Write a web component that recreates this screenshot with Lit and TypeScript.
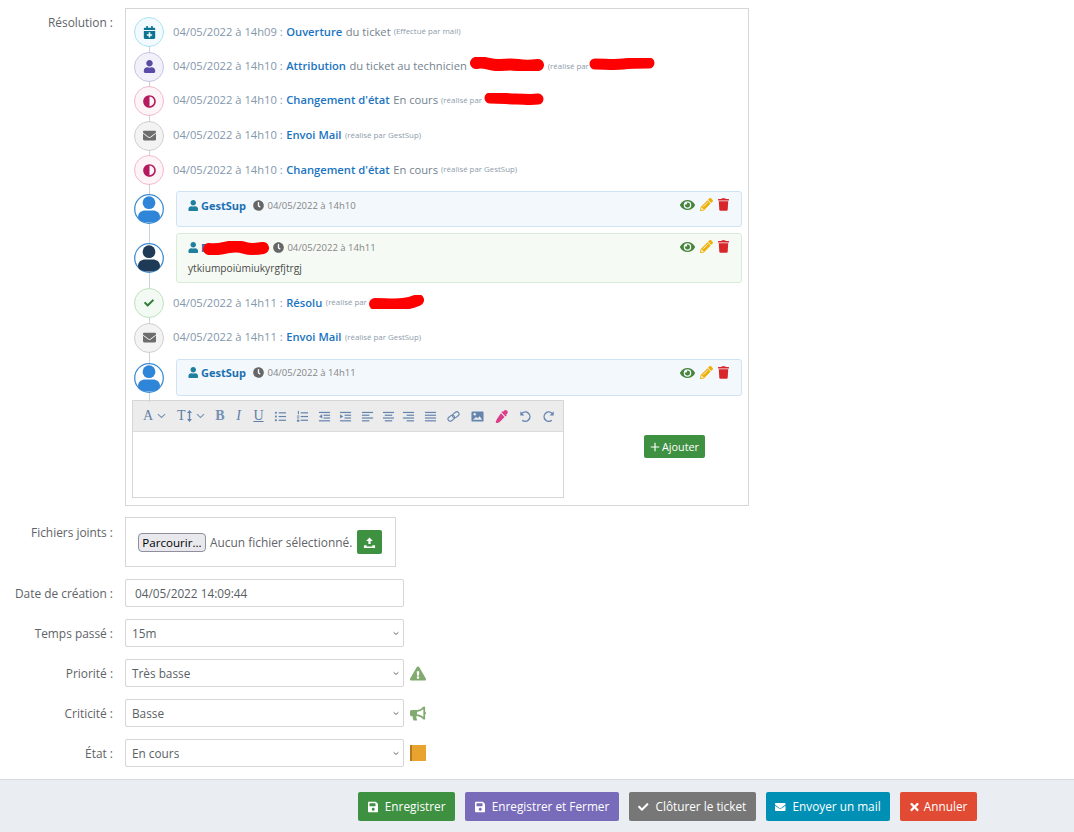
import { LitElement, html, css, svg } from "lit";
import { customElement } from "lit/decorators.js";

const P = {
  user: ["0 0 448 512", "M224 256c70.7 0 128-57.3 128-128S294.7 0 224 0 96 57.3 96 128s57.3 128 128 128zm89.6 32h-16.7c-22.2 10.2-46.9 16-72.9 16s-50.6-5.8-72.9-16h-16.7C60.2 288 0 348.2 0 422.4V464c0 26.5 21.5 48 48 48h352c26.5 0 48-21.5 48-48v-41.6c0-74.2-60.2-134.4-134.4-134.4z"],
  envelope: ["0 0 512 512", "M502.3 190.8c3.9-3.1 9.7-.2 9.7 4.7V400c0 26.5-21.5 48-48 48H48c-26.5 0-48-21.5-48-48V195.6c0-5 5.7-7.8 9.7-4.7 22.4 17.4 52.1 39.5 154.1 113.6 21.1 15.4 56.7 47.8 92.2 47.6 35.7.3 72-32.8 92.3-47.6 102-74.1 131.6-96.3 154-113.7zM256 320c23.2.4 56.6-29.2 73.4-41.4 132.7-96.3 142.8-104.7 173.4-128.7 5.8-4.5 9.2-11.5 9.2-18.9v-19c0-26.5-21.5-48-48-48H48C21.5 64 0 85.5 0 112v19c0 7.4 3.4 14.3 9.2 18.9 30.6 23.9 40.7 32.4 173.4 128.7 16.8 12.2 50.2 41.8 73.4 41.4z"],
  adjust: ["0 0 512 512", "M8 256c0 136.966 111.033 248 248 248s248-111.034 248-248S392.966 8 256 8 8 119.033 8 256zm248 184V72c101.705 0 184 82.311 184 184 0 101.705-82.311 184-184 184z"],
  check: ["0 0 512 512", "M173.898 439.404l-166.4-166.4c-9.997-9.997-9.997-26.206 0-36.204l36.203-36.204c9.997-9.998 26.207-9.998 36.204 0L192 312.69 432.095 72.596c9.997-9.997 26.207-9.997 36.204 0l36.203 36.204c9.997 9.997 9.997 26.206 0 36.204l-294.4 294.401c-9.998 9.997-26.207 9.997-36.204-.001z"],
  calendar: ["0 0 448 512", "M436 160H12c-6.6 0-12-5.4-12-12v-36c0-26.5 21.5-48 48-48h48V12c0-6.6 5.4-12 12-12h40c6.6 0 12 5.4 12 12v52h128V12c0-6.6 5.4-12 12-12h40c6.6 0 12 5.4 12 12v52h48c26.5 0 48 21.5 48 48v36c0 6.6-5.4 12-12 12zM12 192h424c6.6 0 12 5.4 12 12v260c0 26.5-21.5 48-48 48H48c-26.5 0-48-21.5-48-48V204c0-6.6 5.4-12 12-12zm316 140c0-6.6-5.4-12-12-12h-60v-60c0-6.6-5.4-12-12-12h-40c-6.6 0-12 5.4-12 12v60h-60c-6.6 0-12 5.4-12 12v40c0 6.6 5.4 12 12 12h60v60c0 6.6 5.4 12 12 12h40c6.6 0 12-5.4 12-12v-60h60c6.6 0 12-5.4 12-12v-40z"],
  clock: ["0 0 512 512", "M256,8C119,8,8,119,8,256S119,504,256,504,504,393,504,256,393,8,256,8Zm92.49,313h0l-20,25a16,16,0,0,1-22.49,2.5h0l-67-49.72a40,40,0,0,1-15-31.23V112a16,16,0,0,1,16-16h32a16,16,0,0,1,16,16V256l58,42.5A16,16,0,0,1,348.49,321Z"],
  eye: ["0 0 576 512", "M572.52 241.4C518.29 135.59 410.93 64 288 64S57.68 135.64 3.48 241.41a32.35 32.35 0 0 0 0 29.19C57.71 376.41 165.07 448 288 448s230.32-71.64 284.52-177.41a32.35 32.35 0 0 0 0-29.19zM288 400a144 144 0 1 1 144-144 143.93 143.93 0 0 1-144 144zm0-240a95.31 95.31 0 0 0-25.31 3.79 47.85 47.85 0 0 1-66.9 66.9A95.78 95.78 0 1 0 288 160z"],
  pencil: ["0 0 512 512", "M497.9 142.1l-46.1 46.1c-4.7 4.7-12.3 4.7-17 0l-111-111c-4.7-4.7-4.7-12.3 0-17l46.1-46.1c18.7-18.7 49.1-18.7 67.9 0l60.1 60.1c18.8 18.7 18.8 49.1 0 67.9zM284.2 99.8L21.6 362.4.4 483.9c-2.9 16.4 11.4 30.6 27.8 27.8l121.5-21.3 262.6-262.6c4.7-4.7 4.7-12.3 0-17l-111-111c-4.8-4.7-12.4-4.7-17.1 0zM124.1 339.9c-5.5-5.5-5.5-14.3 0-19.8l154-154c5.5-5.5 14.3-5.5 19.8 0s5.5 14.3 0 19.8l-154 154c-5.5 5.5-14.3 5.5-19.8 0zM88 424h48v36.3l-64.5 11.3-31.1-31.1L51.7 376H88v48z"],
  trash: ["0 0 448 512", "M432 32H312l-9.4-18.7A24 24 0 0 0 281.1 0H166.8a23.72 23.72 0 0 0-21.4 13.3L136 32H16A16 16 0 0 0 0 48v32a16 16 0 0 0 16 16h416a16 16 0 0 0 16-16V48a16 16 0 0 0-16-16zM53.2 467a48 48 0 0 0 47.9 45h245.8a48 48 0 0 0 47.9-45L416 128H32z"],
  save: ["0 0 448 512", "M433.941 129.941l-83.882-83.882A48 48 0 0 0 316.118 32H48C21.49 32 0 53.49 0 80v352c0 26.51 21.49 48 48 48h352c26.51 0 48-21.49 48-48V163.882a48 48 0 0 0-14.059-33.941zM224 416c-35.346 0-64-28.654-64-64 0-35.346 28.654-64 64-64s64 28.654 64 64c0 35.346-28.654 64-64 64zm96-304.52V212c0 6.627-5.373 12-12 12H76c-6.627 0-12-5.373-12-12V108c0-6.627 5.373-12 12-12h228.52c3.183 0 6.235 1.264 8.485 3.515l3.48 3.48A11.996 11.996 0 0 1 320 111.48z"],
  times: ["0 0 352 512", "M242.72 256l100.07-100.07c12.28-12.28 12.28-32.19 0-44.48l-22.24-22.24c-12.28-12.28-32.19-12.28-44.48 0L176 189.28 75.93 89.21c-12.28-12.28-32.19-12.28-44.48 0L9.21 111.45c-12.28 12.28-12.28 32.19 0 44.48L109.28 256 9.21 356.07c-12.28 12.28-12.28 32.19 0 44.48l22.24 22.24c12.28 12.28 32.2 12.28 44.48 0L176 322.72l100.07 100.07c12.28 12.28 32.2 12.28 44.48 0l22.24-22.24c12.28-12.28 12.28-32.19 0-44.48L242.72 256z"],
  warn: ["0 0 576 512", "M569.517 440.013C587.975 472.007 564.806 512 527.94 512H48.054c-36.937 0-59.999-40.055-41.577-71.987L246.423 24.995c18.467-32.009 64.72-31.951 83.154 0l239.94 415.018zM288 354c-25.405 0-46 20.595-46 46s20.595 46 46 46 46-20.595 46-46-20.595-46-46-46zm-43.673-165.346l7.418 136c.347 6.364 5.609 11.346 11.982 11.346h48.546c6.373 0 11.635-4.982 11.982-11.346l7.418-136c.375-6.874-5.098-12.654-11.982-12.654h-63.383c-6.884 0-12.356 5.78-11.981 12.654z"],
  bullhorn: ["0 0 576 512", "M576 240c0-23.63-12.95-44.04-32-55.12V32.01C544 23.26 537.02 0 512 0c-7.12 0-14.19 2.38-19.98 7.02l-85.03 68.03C364.28 109.19 310.66 128 256 128H64c-35.35 0-64 28.65-64 64v96c0 35.35 28.65 64 64 64h33.7c-1.39 10.48-2.18 21.14-2.18 32 0 39.77 9.26 77.35 25.56 110.94 5.19 10.69 16.52 17.06 28.4 17.06h74.28c26.05 0 41.69-29.84 25.9-50.56-16.4-21.52-26.15-48.36-26.15-77.44 0-11.11 1.62-21.79 4.41-32H256c54.66 0 108.28 18.81 150.98 52.95l85.03 68.03a32.023 32.023 0 0 0 19.98 7.02c24.92 0 32-22.78 32-32V295.13C563.05 284.04 576 263.63 576 240zm-96 141.42l-33.05-26.44C392.95 311.78 325.12 288 256 288v-96c69.12 0 136.95-23.78 190.95-66.98L480 98.58v282.84z"],
  plus: ["0 0 14 14", "M6.2 1h1.6v5.2H13v1.6H7.8V13H6.2V7.8H1V6.2h5.2z"],
  upload: ["0 0 14 14", "M7 1.5l3.6 4H8.2v3.2H5.8V5.5H3.4zM1 10h3v1.2h6V10h3v2.8H1z"],
} as const;

const fa = (k: keyof typeof P, cls: string) =>
  html`<svg class="fa ${cls}" viewBox=${P[k][0]} aria-hidden="true"><path d=${P[k][1]} fill="currentColor"></path></svg>`;

const blob = (w: number, h: number, d: string) =>
  html`<svg class="blob" width=${w} height=${h} viewBox="0 0 ${w} ${h}" aria-hidden="true"><path d=${d} fill="none" stroke="#f00" stroke-width=${h - 2} stroke-linecap="round" stroke-linejoin="round"></path></svg>`;

const avatar = (color: string) => html`<svg class="avatar" viewBox="0 0 30 30" aria-hidden="true">
  <circle cx="15" cy="15" r="14.3" fill="#fff" stroke="#3f8ed3" stroke-width="1.3"></circle>
  <circle cx="15" cy="8.7" r="6.4" fill=${color}></circle>
  <path d="M4 23c0-4.5 3.5-6.6 7-6.6h8c3.5 0 7 2.1 7 6.6 0 3.8-5 5.6-11 5.6S4 26.8 4 23z" fill=${color}></path>
</svg>`;

const lines = (rows: [number, number][]) =>
  rows.map(([a, b], i) => svg`<rect x=${a} y=${2 + i * 3} width=${b - a} height="1.3"></rect>`);

const tb: Record<string, unknown> = {
  list: svg`<rect x="1" y="2" width="2" height="2"/><rect x="1" y="6" width="2" height="2"/><rect x="1" y="10" width="2" height="2"/><rect x="5" y="2.4" width="8" height="1.3"/><rect x="5" y="6.4" width="8" height="1.3"/><rect x="5" y="10.4" width="8" height="1.3"/>`,
  ol: svg`<rect x="2" y="1" width="1.2" height="3.6"/><rect x="1" y="6" width="2.6" height="1"/><rect x="1" y="8" width="2.6" height="1"/><rect x="1" y="10.4" width="2.6" height="2.2"/><rect x="5" y="2.4" width="8" height="1.3"/><rect x="5" y="6.4" width="8" height="1.3"/><rect x="5" y="10.4" width="8" height="1.3"/>`,
  outdent: svg`${lines([[1, 13], [6, 13], [6, 13], [1, 13]])}<path d="M4.5 4.6v4.6L1.2 6.9z"/>`,
  indent: svg`${lines([[1, 13], [6, 13], [6, 13], [1, 13]])}<path d="M1.2 4.6v4.6l3.3-2.3z"/>`,
  left: svg`${lines([[1, 13], [1, 9], [1, 13], [1, 9]])}`,
  center: svg`${lines([[1, 13], [3, 11], [1, 13], [3, 11]])}`,
  right: svg`${lines([[1, 13], [5, 13], [1, 13], [5, 13]])}`,
  justify: svg`${lines([[1, 13], [1, 13], [1, 13], [1, 13]])}`,
  link: svg`<g fill="none" stroke="currentColor" stroke-width="1.2"><rect x="0.8" y="6.4" width="7.6" height="4.8" rx="2.4" transform="rotate(-38 4.6 8.8)"/><rect x="5.6" y="2.8" width="7.6" height="4.8" rx="2.4" transform="rotate(-38 9.4 5.2)"/></g>`,
  image: svg`<path fill-rule="evenodd" d="M1.5 1.5h11a1 1 0 0 1 1 1v9a1 1 0 0 1-1 1h-11a1 1 0 0 1-1-1v-9a1 1 0 0 1 1-1zM2 10.5h10L9.3 6.6 7.3 9 5.6 7.6zM4 3.2a1.4 1.4 0 1 0 0 2.8 1.4 1.4 0 0 0 0-2.8z"/>`,
  dropper: svg`<path fill="#dc3d8a" d="M8.7 1.8l1-1a2 2 0 0 1 3.3 3.3l-1 1 .6.7-1.2 1.2L6.9 2.5l1.1-1.2zM6.3 3.6l4 4-5.6 5.6c-.5.5-1.3.3-1.9.8-.5.4-1.1.2-1.6-.3-.4-.5-.5-1-.1-1.5.4-.6.3-1.4.7-1.9z"/>`,
  undo: svg`<path fill="none" stroke="currentColor" stroke-width="1.5" d="M3.2 3.6a5 5 0 1 1 .3 7.4"/><path d="M1.4 1.4v4.4h4.4z"/>`,
  redo: svg`<path fill="none" stroke="currentColor" stroke-width="1.5" d="M10.8 3.6a5 5 0 1 0-.3 7.4"/><path d="M12.6 1.4v4.4H8.2z"/>`,
};
const ti = (k: string) => html`<svg class="ti" viewBox="0 0 14 14" fill="currentColor" aria-hidden="true">${tb[k]}</svg>`;
const chev = html`<svg class="chev" viewBox="0 0 10 6" aria-hidden="true"><path d="M1 1l4 3.6L9 1" fill="none" stroke="currentColor" stroke-width="1.2"></path></svg>`;
const sel = (t: string) => html`<span class="selwrap"><select class="ctl"><option>${t}</option></select><svg class="selchev" viewBox="0 0 10 6" aria-hidden="true"><path d="M1 1l4 3.6L9 1" fill="none" stroke="currentColor" stroke-width="1.5"></path></svg></span>`;

type Ev = { time: string; title: string; rest?: string; by: unknown; kind: string; icon: keyof typeof P; gap?: string };

@customElement("app-root")
export class AppRoot extends LitElement {
  static styles = css`
    :host { display: block; font-family: "Open Sans", "Liberation Sans", sans-serif; font-size: 11.8px; color: #666; background: #fff; height: 832px; position: relative; overflow: hidden; }
    * { box-sizing: border-box; }
    .fa { display: inline-block; flex: none; }
    .form { display: flex; flex-direction: column; gap: 12px; padding-top: 8px; height: 771px; }
    .row { display: grid; grid-template-columns: 113px auto; column-gap: 12px; justify-content: start; align-items: center; }
    .row.top { align-items: start; }
    .row.first { margin-bottom: -1px; }
    .lbl { text-align: right; color: #5f6468; font-size: 11.9px; line-height: 16px; margin-top: -1px; }
    .first .lbl { margin-top: 0; padding-top: 6px; }
    .files-row .lbl { margin-top: 0; padding-top: 7px; }

    .box { width: 624px; height: 498px; border: 1px solid #d6d6d6; padding: 5.8px 6px 0 6px; display: flex; flex-direction: column; }
    .events { position: relative; display: flex; flex-direction: column; padding-left: 2px; }
    .events::before { content: ""; position: absolute; left: 17px; top: 10px; bottom: -6px; width: 1px; background: #c7d2dc; }
    .ev { height: 34.5px; display: flex; align-items: center; gap: 9px; }
    .ev.r1 { margin-top: 3.1px; }
    .ev.t .txt { margin-top: -3px; }
    .dot { position: relative; z-index: 1; width: 30px; height: 30px; border-radius: 50%; border: 1.3px solid; display: flex; align-items: center; justify-content: center; flex: none; }
    .dot .fa { width: 13px; height: 13px; }
    .info { background: #f3fafd; border-color: #a6e3f4; color: #0c7390; }
    .purple { background: #f2f1f9; border-color: #c8c3e2; color: #5a4ca5; }
    .pink { background: #fdf4f7; border-color: #f2b9cd; color: #b41a5f; }
    .grey { background: #f3f3f3; border-color: #cfcfcf; color: #6d6d6d; }
    .green { background: #f3faf3; border-color: #bde2bd; color: #2f7d33; }
    .dot.green .fa { width: 10px; height: 10px; }
    .txt { font-size: 11.2px; color: #8497ab; white-space: nowrap; display: flex; align-items: center; margin-top: -2px; }
    .txt b { font-weight: 600; color: #1a74bf; font-size: 11.2px; margin: 0 3.5px; }
    .txt .rest { color: #75838f; }
    .txt small { font-size: 7.9px; color: #8d9cab; margin-left: 3px; display: inline-flex; align-items: center; }
    .txt b + small { margin-left: 0; }
    .blob { display: inline-block; flex: none; }
    .red { margin-left: 3px; margin-right: 1px; }
    .rtight { margin-left: -2px; }

    .crow { display: flex; align-items: center; gap: 12px; position: relative; }
    .avatar { width: 30px; height: 30px; flex: none; position: relative; z-index: 1; }
    .crow.c1 { margin-top: 3.7px; }
    .crow.c2 { margin-top: 6px; }
    .crow.c3 { margin-top: 4px; }
    .card { flex: 1; border: 1px solid #cfe3f4; background: #f3f8fc; border-radius: 3px; padding: 6px 12px 0 11px; height: 36px; position: relative; z-index: 1; }
    .crow.c3 .card { height: 37px; padding-top: 4.5px; }
    .crow.c3 .actions { margin-top: 0; }
    .card.ok { border-color: #d9ecd9; background: #f5faf4; height: 50px; }
    .chead { display: flex; align-items: center; height: 16px; }
    .uicon { width: 10.5px; height: 11px; color: #1f7f9e; margin-right: 2.5px; }
    .name { font-size: 11px; font-weight: 700; color: #1a70b2; white-space: nowrap; display: flex; align-items: center; }
    .name .blob { margin-left: -5px; margin-right: -3px; }
    .when { display: flex; align-items: center; margin-left: 7.5px; color: #858585; font-size: 9.5px; white-space: nowrap; }
    .when .fa { width: 11px; height: 11px; color: #666; margin-right: 3px; }
    .actions { margin-left: auto; display: flex; align-items: center; gap: 5px; margin-top: -2px; }
    .actions .eye { width: 15px; height: 14px; color: #47853c; }
    .actions .pen { width: 13px; height: 13px; color: #efb006; }
    .actions .del { width: 11px; height: 13px; color: #d9262b; }
    .body { font-size: 10.2px; line-height: 16px; margin-top: 4px; color: #4a4a4a; }

    .composer { display: flex; margin-top: 4px; align-items: flex-start; }
    .editor { width: 432px; height: 98px; border: 1px solid #d6d6d6; background: #fff; }
    .tools { height: 31px; background: #ececec; border-bottom: 1px solid #dcdcdc; display: grid; align-items: center; justify-items: center; color: #6585ae;
      grid-template-columns: 44px 34px 18px 19px 21px 22.5px 22.5px 21px 21.5px 21.5px 20.5px 20.5px 22px 24.5px 24px 24px 23.5px 22px; }
    .tools .combo { justify-self: start; display: flex; align-items: center; gap: 4px; }
    .tools .combo.a { padding-left: 10px; }
    .glyph { font-family: "Liberation Serif", serif; font-size: 14px; font-weight: 400; line-height: 14px; color: #5f7fa8; }
    .glyph.i { font-style: italic; font-size: 14px; }
    .glyph.u { text-decoration: underline; font-size: 14px; }
    .glyph.b { font-size: 14px; font-weight: 700; color: #7390b5; }
    .ti { width: 13px; height: 13px; display: block; }
    .chev { width: 9px; height: 6px; color: #7a93b3; }
    .arrow { width: 5px; height: 12px; margin-left: -3px; }
    .add { margin: 35px 0 0 80px; width: 61px; height: 23px; background: #3f9142; border-radius: 2px; color: #fff; border: 0; font: 10.8px "Open Sans", sans-serif; display: flex; align-items: center; justify-content: center; gap: 2px; padding: 0; }
    .add .fa { width: 10px; height: 10px; }

    .filebox { width: 271px; height: 50px; border: 1px solid #d6d6d6; display: flex; align-items: center; padding-left: 12px; }
    .browse { width: 68px; height: 19px; background: #e9e9ed; border: 1px solid #8f8f9d; border-radius: 4px; font: 11.6px "Open Sans", sans-serif; color: #000; padding: 0; white-space: nowrap; }
    .nofile { margin-left: 4px; color: #5f6468; white-space: nowrap; font-size: 11.9px; }
    .up { margin-left: 5px; width: 25px; height: 24px; background: #3f9142; border-radius: 2px; display: flex; align-items: center; justify-content: center; color: #fff; border: 0; padding: 0; }
    .up .fa { width: 13px; height: 13px; }

    .ctl { display: block; width: 279px; height: 28px; border: 1px solid #d6d6d6; border-radius: 2px; background: #fff; font: 11.8px "Open Sans", sans-serif; color: #5a5f64; }
    input.ctl { padding: 0 9px; }
    select.ctl { padding: 0 6px; appearance: none; -webkit-appearance: none; }
    .selwrap { display: block; position: relative; width: 279px; }
    .selchev { position: absolute; right: 5px; top: 12px; width: 6px; height: 5px; color: #555; pointer-events: none; }
    .with { display: flex; align-items: center; gap: 6px; }
    .hint { width: 16px; height: 15px; color: #80aa6f; }
    .book { width: 16px; height: 16px; background: #e9a430; border-left: 2px solid #b67a1d; }

    .footer { position: absolute; left: 0; right: 0; top: 779px; bottom: 0; background: #eaedf1; border-top: 1px solid #d6dade; display: flex; gap: 9.6px; padding: 12px 0 0 358px; align-items: flex-start; }
    .btn { height: 29px; border: 0; border-radius: 2px; color: #fff; font: 11.8px "Open Sans", sans-serif; display: flex; align-items: center; gap: 6.5px; padding: 0 9.8px 2px; white-space: nowrap; }
    .btn .fa { width: 10.5px; height: 12px; margin-top: 2px; }
    .b1 { background: #3f9142; }
    .b2 { background: #786cba; }
    .b3 { background: #777777; }
    .b4 { background: #0090b5; }
    .b5 { background: #e14a33; gap: 5px; }
    .b5 .fa { width: 9px; }
  `;

  private evRow(e: Ev) {
    return html`<div class="ev ${e.gap ?? ""}">
      <span class="dot ${e.kind}">${fa(e.icon, "")}</span>
      <span class="txt">${e.time} :<b>${e.title}</b>${e.rest ? html`<span class="rest">${e.rest}</span>` : ""}${e.by}</span>
    </div>`;
  }

  private cardRow(cls: string, color: string, name: unknown, when: string, ok = false, body = "") {
    return html`<div class="crow ${cls}">
      ${avatar(color)}
      <div class="card ${ok ? "ok" : ""}">
        <div class="chead">
          ${fa("user", "uicon")}
          <span class="name">${name}</span>
          <span class="when">${fa("clock", "")}${when}</span>
          <span class="actions">${fa("eye", "eye")}${fa("pencil", "pen")}${fa("trash", "del")}</span>
        </div>
        ${body ? html`<div class="body">${body}</div>` : ""}
      </div>
    </div>`;
  }

  render() {
    const gs = html`<small>(réalisé par GestSup)</small>`;
    return html`
      <div class="form">
        <div class="row top first">
          <div class="lbl">Résolution :</div>
          <div class="box">
            <div class="events">
              ${this.evRow({ time: "04/05/2022 à 14h09", title: "Ouverture", rest: "du ticket", kind: "info", icon: "calendar", by: html`<small>(Effectué par mail)</small>` })}
              ${this.evRow({ time: "04/05/2022 à 14h10", title: "Attribution", rest: "du ticket au technicien", kind: "purple", icon: "user", by: html`<span class="red">${blob(74, 14, "M6 6c10-2 14 3 24 2s12-1 18 0 12 1 20 0")}</span><small>(réalisé par&nbsp;<span class="rtight">${blob(66, 13, "M6 6c10 0 20 1 28 0s20-1 26-1")}</span></small>` })}
              ${this.evRow({ time: "04/05/2022 à 14h10", title: "Changement d'état", rest: "En cours", kind: "pink", icon: "adjust", gap: "t", by: html`<small>(réalisé par&nbsp;${blob(60, 13, "M6 5c12 0 18 1 26 1s14 1 22 0")}</small>` })}
              ${this.evRow({ time: "04/05/2022 à 14h10", title: "Envoi Mail", kind: "grey", icon: "envelope", by: gs })}
              ${this.evRow({ time: "04/05/2022 à 14h10", title: "Changement d'état", rest: "En cours", kind: "pink", icon: "adjust", by: gs })}
              ${this.cardRow("c1", "#2f86d8", "GestSup", "04/05/2022 à 14h10")}
              ${this.cardRow("c2", "#1f3a56", html`P${blob(66, 14, "M6 8c10 1 14-1 20-2s10-1 16 1 12 1 18 0")}`, "04/05/2022 à 14h11", true, "ytkiumpoiùmiukyrgfjtrgj")}
              ${this.evRow({ time: "04/05/2022 à 14h11", title: "Résolu", kind: "green", icon: "check", gap: "r1", by: html`<small>(réalisé par&nbsp;${blob(55, 14, "M6 9c10 0 20 1 28 0s10-2 15-4")}</small>` })}
              ${this.evRow({ time: "04/05/2022 à 14h11", title: "Envoi Mail", kind: "grey", icon: "envelope", by: gs })}
              ${this.cardRow("c3", "#2f86d8", "GestSup", "04/05/2022 à 14h11")}
            </div>
            <div class="composer">
              <div class="editor">
                <div class="tools">
                  <span class="combo a"><span class="glyph">A</span>${chev}</span>
                  <span class="combo"><span class="glyph">T</span><svg class="arrow" viewBox="0 0 5 12" aria-hidden="true"><path d="M2.5 0L5 3H3.2v6H5l-2.5 3L0 9h1.8V3H0z" fill="currentColor"></path></svg>${chev}</span>
                  <span class="glyph b">B</span>
                  <span class="glyph i">I</span>
                  <span class="glyph u">U</span>
                  ${["list", "ol", "outdent", "indent", "left", "center", "right", "justify", "link", "image", "dropper", "undo", "redo"].map((k) => ti(k))}
                </div>
              </div>
              <button class="add">${fa("plus", "")}Ajouter</button>
            </div>
          </div>
        </div>

        <div class="row top files-row">
          <div class="lbl">Fichiers joints :</div>
          <div class="filebox">
            <button class="browse">Parcourir...</button>
            <span class="nofile">Aucun fichier sélectionné.</span>
            <button class="up">${fa("upload", "")}</button>
          </div>
        </div>

        <div class="row">
          <div class="lbl">Date de création :</div>
          <input class="ctl" .value=${"04/05/2022 14:09:44"} />
        </div>
        <div class="row">
          <div class="lbl">Temps passé :</div>
          ${sel("15m")}
        </div>
        <div class="row">
          <div class="lbl">Priorité :</div>
          <div class="with">${sel("Très basse")}${fa("warn", "hint")}</div>
        </div>
        <div class="row">
          <div class="lbl">Criticité :</div>
          <div class="with">${sel("Basse")}${fa("bullhorn", "hint")}</div>
        </div>
        <div class="row">
          <div class="lbl">État :</div>
          <div class="with">${sel("En cours")}<span class="book"></span></div>
        </div>
      </div>

      <div class="footer">
        <button class="btn b1">${fa("save", "")}Enregistrer</button>
        <button class="btn b2">${fa("save", "")}Enregistrer et Fermer</button>
        <button class="btn b3">${fa("check", "")}Clôturer le ticket</button>
        <button class="btn b4">${fa("envelope", "")}Envoyer un mail</button>
        <button class="btn b5">${fa("times", "")}Annuler</button>
      </div>
    `;
  }
}
